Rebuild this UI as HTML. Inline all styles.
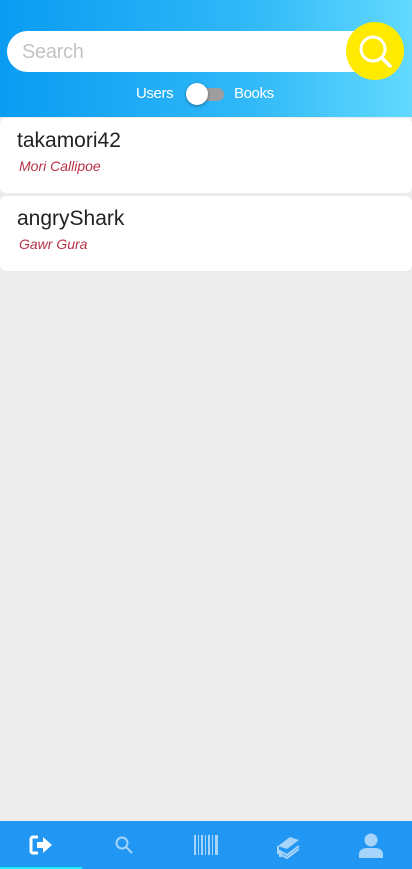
<!DOCTYPE html>
<html><head><style>
body{margin:0;width:412px;height:869px;background:#ececec;font-family:"Liberation Sans",sans-serif;position:relative;overflow:hidden}
.hdr{position:absolute;left:0;top:0;width:412px;height:117px;background:linear-gradient(90deg,#0a9cf2 0%,#30b8f8 60%,#62d9fd 100%)}
.search{position:absolute;left:7px;top:31px;width:368px;height:41px;background:#fff;border-radius:21px}
.search span{position:absolute;left:15px;top:10px;font-size:20px;color:#c4c4c4;letter-spacing:-0.3px}
.btn{position:absolute;left:346px;top:22px;width:58px;height:58px;border-radius:50%;background:#ffea00}
.lbl{position:absolute;top:85px;font-size:15px;color:#fff;letter-spacing:-0.4px}
.track{position:absolute;left:190px;top:88px;width:34px;height:13px;border-radius:7px;background:#9e9e9e}
.knob{position:absolute;left:186px;top:83px;width:22px;height:22px;border-radius:50%;background:#fff;box-shadow:0 1px 3px rgba(0,0,0,.4)}
.card{position:absolute;left:0;width:412px;height:75px;background:#fff;border-radius:6px}
.card .n{position:absolute;left:17px;top:11px;font-size:21px;color:#222}
.card .s{position:absolute;left:19px;top:40px;font-size:14px;font-style:italic;color:#b83248}
.nav{position:absolute;left:0;top:821px;width:412px;height:48px;background:#2196f3}
.ind{position:absolute;left:0;bottom:0;width:82px;height:2px;background:#1de9f6}
</style></head><body>
<div class="hdr">
<div class="search"><span>Search</span></div>
<div class="btn"><svg width="58" height="58" viewBox="0 0 58 58"><circle cx="27" cy="27" r="12" fill="none" stroke="#fff" stroke-width="3"/><line x1="36" y1="36" x2="44" y2="44" stroke="#fff" stroke-width="3.5" stroke-linecap="round"/></svg></div>
<div class="lbl" style="left:136px">Users</div>
<div class="track"></div><div class="knob"></div>
<div class="lbl" style="left:234px">Books</div>
</div>
<div class="card" style="top:118px"><div class="n">takamori42</div><div class="s">Mori Callipoe</div></div>
<div class="card" style="top:196px"><div class="n">angryShark</div><div class="s">Gawr Gura</div></div>
<div class="nav">
<svg style="position:absolute;left:28px;top:13px" width="26" height="22" viewBox="0 0 26 22"><path d="M10 3H5a2 2 0 0 0-2 2v12a2 2 0 0 0 2 2h5" fill="none" stroke="#fff" stroke-width="3"/><path d="M9 8h6V3l9 8-9 8v-5H9z" fill="#fff"/></svg>
<svg style="position:absolute;left:114px;top:14px" width="20" height="20" viewBox="0 0 20 20"><circle cx="8" cy="8" r="5.5" fill="none" stroke="#a6d4fa" stroke-width="2"/><line x1="12" y1="12" x2="18" y2="18" stroke="#a6d4fa" stroke-width="2"/></svg>
<svg style="position:absolute;left:194px;top:14px" width="25" height="20" viewBox="0 0 25 20" fill="#a6d4fa"><rect x="0" width="2" height="20"/><rect x="4" width="1" height="20"/><rect x="7" width="2" height="20"/><rect x="11" width="1" height="20"/><rect x="14" width="2" height="20"/><rect x="18" width="1" height="20"/><rect x="21" width="3" height="20"/></svg>
<svg style="position:absolute;left:275px;top:12px" width="26" height="26" viewBox="0 0 26 26"><path d="M3 13L15 4l9 3-12 9z" fill="#a6d4fa"/><path d="M3 13v4l9 5 12-9M3 17v3l9 5 12-9" fill="none" stroke="#a6d4fa" stroke-width="2"/><rect x="4" y="18" width="3" height="6" fill="#a6d4fa"/></svg>
<svg style="position:absolute;left:358px;top:11px" width="26" height="26" viewBox="0 0 26 26" fill="#a6d4fa"><circle cx="13" cy="8" r="6.5"/><path d="M1 26v-4c0-4 4-6 8-6h8c4 0 8 2 8 6v4z"/></svg>
<div class="ind"></div>
</div>
</body></html>
